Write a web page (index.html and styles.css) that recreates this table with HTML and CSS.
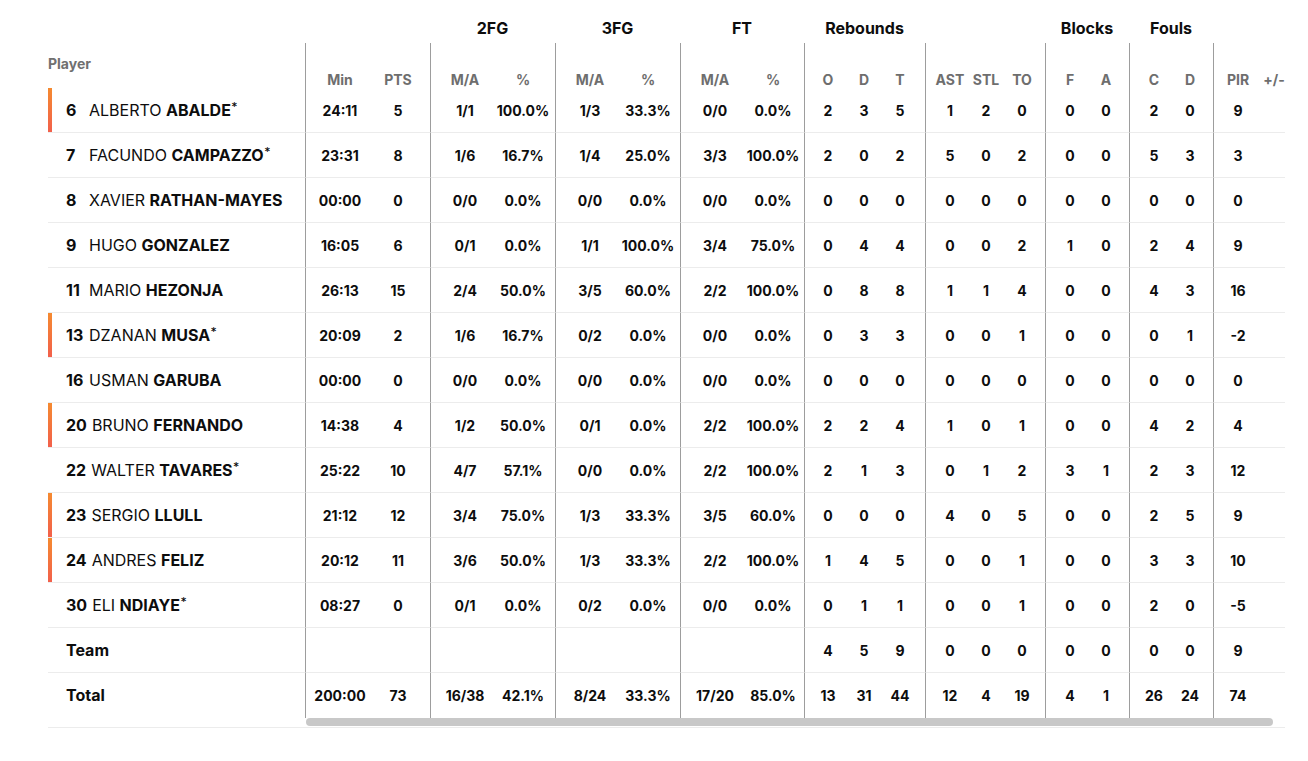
FILE: index.html
```html
<!DOCTYPE html>
<html lang="en">
<head>
<meta charset="utf-8">
<title>Box score</title>
<link rel="stylesheet" href="styles.css">
</head>
<body>
<div class="box">
  <div class="players">
    <div class="phead"><span>Player</span></div>
    <div class="prow on"><span class="num">6</span><span class="fn">ALBERTO</span>&nbsp;<b>ABALDE</b><sup>*</sup></div>
    <div class="prow"><span class="num">7</span><span class="fn">FACUNDO</span>&nbsp;<b>CAMPAZZO</b><sup>*</sup></div>
    <div class="prow"><span class="num">8</span><span class="fn">XAVIER</span>&nbsp;<b>RATHAN-MAYES</b></div>
    <div class="prow"><span class="num">9</span><span class="fn">HUGO</span>&nbsp;<b>GONZALEZ</b></div>
    <div class="prow"><span class="num">11</span><span class="fn">MARIO</span>&nbsp;<b>HEZONJA</b></div>
    <div class="prow on"><span class="num">13</span><span class="fn">DZANAN</span>&nbsp;<b>MUSA</b><sup>*</sup></div>
    <div class="prow"><span class="num">16</span><span class="fn">USMAN</span>&nbsp;<b>GARUBA</b></div>
    <div class="prow on"><span class="num">20</span><span class="fn">BRUNO</span>&nbsp;<b>FERNANDO</b></div>
    <div class="prow"><span class="num">22</span><span class="fn">WALTER</span>&nbsp;<b>TAVARES</b><sup>*</sup></div>
    <div class="prow on"><span class="num">23</span><span class="fn">SERGIO</span>&nbsp;<b>LLULL</b></div>
    <div class="prow on"><span class="num">24</span><span class="fn">ANDRES</span>&nbsp;<b>FELIZ</b></div>
    <div class="prow"><span class="num">30</span><span class="fn">ELI</span>&nbsp;<b>NDIAYE</b><sup>*</sup></div>
    <div class="prow"><b>Team</b></div>
    <div class="prow last"><b>Total</b></div>
  </div>
  <div class="scroll">
    <div class="stats">
      <div class="grow">
        <div class="g g-a"></div><div class="g g-b">2FG</div><div class="g g-b">3FG</div><div class="g g-c">FT</div><div class="g g-r">Rebounds</div><div class="g g-s"></div><div class="g g-k">Blocks</div><div class="g g-k">Fouls</div><div class="g g-p"></div>
      </div>
      <div class="row sub">
        <div class="g g-a"><span>Min</span><span>PTS</span></div><div class="g g-b"><span>M/A</span><span>%</span></div><div class="g g-b"><span>M/A</span><span>%</span></div><div class="g g-c"><span>M/A</span><span>%</span></div><div class="g g-r"><span>O</span><span>D</span><span>T</span></div><div class="g g-s"><span>AST</span><span>STL</span><span>TO</span></div><div class="g g-k"><span>F</span><span>A</span></div><div class="g g-k"><span>C</span><span>D</span></div><div class="g g-p"><span>PIR</span><span>+/-</span></div>
      </div>
      <div class="row">
        <div class="g g-a"><span>24:11</span><span>5</span></div><div class="g g-b"><span>1/1</span><span>100.0%</span></div><div class="g g-b"><span>1/3</span><span>33.3%</span></div><div class="g g-c"><span>0/0</span><span>0.0%</span></div><div class="g g-r"><span>2</span><span>3</span><span>5</span></div><div class="g g-s"><span>1</span><span>2</span><span>0</span></div><div class="g g-k"><span>0</span><span>0</span></div><div class="g g-k"><span>2</span><span>0</span></div><div class="g g-p"><span>9</span><span></span></div>
      </div>
      <div class="row">
        <div class="g g-a"><span>23:31</span><span>8</span></div><div class="g g-b"><span>1/6</span><span>16.7%</span></div><div class="g g-b"><span>1/4</span><span>25.0%</span></div><div class="g g-c"><span>3/3</span><span>100.0%</span></div><div class="g g-r"><span>2</span><span>0</span><span>2</span></div><div class="g g-s"><span>5</span><span>0</span><span>2</span></div><div class="g g-k"><span>0</span><span>0</span></div><div class="g g-k"><span>5</span><span>3</span></div><div class="g g-p"><span>3</span><span></span></div>
      </div>
      <div class="row">
        <div class="g g-a"><span>00:00</span><span>0</span></div><div class="g g-b"><span>0/0</span><span>0.0%</span></div><div class="g g-b"><span>0/0</span><span>0.0%</span></div><div class="g g-c"><span>0/0</span><span>0.0%</span></div><div class="g g-r"><span>0</span><span>0</span><span>0</span></div><div class="g g-s"><span>0</span><span>0</span><span>0</span></div><div class="g g-k"><span>0</span><span>0</span></div><div class="g g-k"><span>0</span><span>0</span></div><div class="g g-p"><span>0</span><span></span></div>
      </div>
      <div class="row">
        <div class="g g-a"><span>16:05</span><span>6</span></div><div class="g g-b"><span>0/1</span><span>0.0%</span></div><div class="g g-b"><span>1/1</span><span>100.0%</span></div><div class="g g-c"><span>3/4</span><span>75.0%</span></div><div class="g g-r"><span>0</span><span>4</span><span>4</span></div><div class="g g-s"><span>0</span><span>0</span><span>2</span></div><div class="g g-k"><span>1</span><span>0</span></div><div class="g g-k"><span>2</span><span>4</span></div><div class="g g-p"><span>9</span><span></span></div>
      </div>
      <div class="row">
        <div class="g g-a"><span>26:13</span><span>15</span></div><div class="g g-b"><span>2/4</span><span>50.0%</span></div><div class="g g-b"><span>3/5</span><span>60.0%</span></div><div class="g g-c"><span>2/2</span><span>100.0%</span></div><div class="g g-r"><span>0</span><span>8</span><span>8</span></div><div class="g g-s"><span>1</span><span>1</span><span>4</span></div><div class="g g-k"><span>0</span><span>0</span></div><div class="g g-k"><span>4</span><span>3</span></div><div class="g g-p"><span>16</span><span></span></div>
      </div>
      <div class="row">
        <div class="g g-a"><span>20:09</span><span>2</span></div><div class="g g-b"><span>1/6</span><span>16.7%</span></div><div class="g g-b"><span>0/2</span><span>0.0%</span></div><div class="g g-c"><span>0/0</span><span>0.0%</span></div><div class="g g-r"><span>0</span><span>3</span><span>3</span></div><div class="g g-s"><span>0</span><span>0</span><span>1</span></div><div class="g g-k"><span>0</span><span>0</span></div><div class="g g-k"><span>0</span><span>1</span></div><div class="g g-p"><span>-2</span><span></span></div>
      </div>
      <div class="row">
        <div class="g g-a"><span>00:00</span><span>0</span></div><div class="g g-b"><span>0/0</span><span>0.0%</span></div><div class="g g-b"><span>0/0</span><span>0.0%</span></div><div class="g g-c"><span>0/0</span><span>0.0%</span></div><div class="g g-r"><span>0</span><span>0</span><span>0</span></div><div class="g g-s"><span>0</span><span>0</span><span>0</span></div><div class="g g-k"><span>0</span><span>0</span></div><div class="g g-k"><span>0</span><span>0</span></div><div class="g g-p"><span>0</span><span></span></div>
      </div>
      <div class="row">
        <div class="g g-a"><span>14:38</span><span>4</span></div><div class="g g-b"><span>1/2</span><span>50.0%</span></div><div class="g g-b"><span>0/1</span><span>0.0%</span></div><div class="g g-c"><span>2/2</span><span>100.0%</span></div><div class="g g-r"><span>2</span><span>2</span><span>4</span></div><div class="g g-s"><span>1</span><span>0</span><span>1</span></div><div class="g g-k"><span>0</span><span>0</span></div><div class="g g-k"><span>4</span><span>2</span></div><div class="g g-p"><span>4</span><span></span></div>
      </div>
      <div class="row">
        <div class="g g-a"><span>25:22</span><span>10</span></div><div class="g g-b"><span>4/7</span><span>57.1%</span></div><div class="g g-b"><span>0/0</span><span>0.0%</span></div><div class="g g-c"><span>2/2</span><span>100.0%</span></div><div class="g g-r"><span>2</span><span>1</span><span>3</span></div><div class="g g-s"><span>0</span><span>1</span><span>2</span></div><div class="g g-k"><span>3</span><span>1</span></div><div class="g g-k"><span>2</span><span>3</span></div><div class="g g-p"><span>12</span><span></span></div>
      </div>
      <div class="row">
        <div class="g g-a"><span>21:12</span><span>12</span></div><div class="g g-b"><span>3/4</span><span>75.0%</span></div><div class="g g-b"><span>1/3</span><span>33.3%</span></div><div class="g g-c"><span>3/5</span><span>60.0%</span></div><div class="g g-r"><span>0</span><span>0</span><span>0</span></div><div class="g g-s"><span>4</span><span>0</span><span>5</span></div><div class="g g-k"><span>0</span><span>0</span></div><div class="g g-k"><span>2</span><span>5</span></div><div class="g g-p"><span>9</span><span></span></div>
      </div>
      <div class="row">
        <div class="g g-a"><span>20:12</span><span>11</span></div><div class="g g-b"><span>3/6</span><span>50.0%</span></div><div class="g g-b"><span>1/3</span><span>33.3%</span></div><div class="g g-c"><span>2/2</span><span>100.0%</span></div><div class="g g-r"><span>1</span><span>4</span><span>5</span></div><div class="g g-s"><span>0</span><span>0</span><span>1</span></div><div class="g g-k"><span>0</span><span>0</span></div><div class="g g-k"><span>3</span><span>3</span></div><div class="g g-p"><span>10</span><span></span></div>
      </div>
      <div class="row">
        <div class="g g-a"><span>08:27</span><span>0</span></div><div class="g g-b"><span>0/1</span><span>0.0%</span></div><div class="g g-b"><span>0/2</span><span>0.0%</span></div><div class="g g-c"><span>0/0</span><span>0.0%</span></div><div class="g g-r"><span>0</span><span>1</span><span>1</span></div><div class="g g-s"><span>0</span><span>0</span><span>1</span></div><div class="g g-k"><span>0</span><span>0</span></div><div class="g g-k"><span>2</span><span>0</span></div><div class="g g-p"><span>-5</span><span></span></div>
      </div>
      <div class="row">
        <div class="g g-a"><span></span><span></span></div><div class="g g-b"><span></span><span></span></div><div class="g g-b"><span></span><span></span></div><div class="g g-c"><span></span><span></span></div><div class="g g-r"><span>4</span><span>5</span><span>9</span></div><div class="g g-s"><span>0</span><span>0</span><span>0</span></div><div class="g g-k"><span>0</span><span>0</span></div><div class="g g-k"><span>0</span><span>0</span></div><div class="g g-p"><span>9</span><span></span></div>
      </div>
      <div class="row last">
        <div class="g g-a"><span>200:00</span><span>73</span></div><div class="g g-b"><span>16/38</span><span>42.1%</span></div><div class="g g-b"><span>8/24</span><span>33.3%</span></div><div class="g g-c"><span>17/20</span><span>85.0%</span></div><div class="g g-r"><span>13</span><span>31</span><span>44</span></div><div class="g g-s"><span>12</span><span>4</span><span>19</span></div><div class="g g-k"><span>4</span><span>1</span></div><div class="g g-k"><span>26</span><span>24</span></div><div class="g g-p"><span>74</span><span></span></div>
      </div>
    </div>
    <div class="bar"><div class="thumb"></div></div>
  </div>
</div>
</body>
</html>
```

FILE: styles.css
```css
* { box-sizing: border-box; }
html, body { margin: 0; padding: 0; background: #fff; }
body {
  font-family: Inter, "Liberation Sans", sans-serif;
  color: #0d0d0d;
}
.box {
  display: flex;
  width: 1237px;
  margin-left: 48px;
  border-bottom: 1px solid #ececec;
}
.players {
  width: 257px;
  flex: none;
  display: flex;
  flex-direction: column;
}
.phead {
  height: 88px;
  padding-top: 55px;
  font-size: 14px;
  line-height: 18px;
  font-weight: 700;
  color: #707070;
}
.prow {
  height: 45px;
  border-bottom: 1px solid #ececec;
  padding-left: 18px;
  font-size: 16px;
  line-height: 44px;
  white-space: nowrap;
  display: flex;
  align-items: baseline;
}
.prow.on {
  background: linear-gradient(#f58a30, #f2604b) no-repeat 0 0 / 4px 100%;
}
.prow.last { border-bottom: none; }
.prow b { font-weight: 700; }
.num {
  font-weight: 700;
  min-width: 18px;
  margin-right: 5px;
}
.fn { font-weight: 400; }
.prow sup {
  font-family: "DejaVu Sans", sans-serif;
  font-size: 10px;
  font-weight: 700;
  line-height: 10px;
  align-self: flex-start;
  margin-top: 14px;
  margin-left: 1px;
}
.scroll {
  width: 980px;
  flex: none;
  overflow: hidden;
}
.stats { width: 993px; }
.grow {
  display: flex;
  height: 43px;
}
.grow .g {
  padding-top: 18px;
  line-height: 20px;
  font-size: 16px;
  font-weight: 700;
  text-align: center;
}
.row {
  display: flex;
  height: 45px;
}
.g { flex: none; }
.row .g {
  display: flex;
  border-left: 1px solid #9d9d9d;
  border-bottom: 1px solid #ececec;
  padding-left: 6px;
  font-size: 14px;
  font-weight: 700;
  align-items: center;
}
.row .g span {
  width: 36px;
  flex: none;
  text-align: center;
  white-space: nowrap;
}
.g-a, .g-b { width: 125px; }
.g-c { width: 124px; }
.g-r { width: 121px; }
.g-s { width: 120px; }
.g-k { width: 84px; }
.g-p { width: 85px; }
.row .g-a, .row .g-b, .row .g-c { padding-left: 5px; }
.row .g-r { padding-left: 5px; }
.row .g-a span, .row .g-b span, .row .g-c span { width: 58px; }
.row.sub .g {
  border-bottom: none;
  align-items: flex-end;
  line-height: 17px;
  color: #6e6e6e;
}
.row.last .g { border-bottom: none; }
.bar { height: 9px; }
.thumb {
  margin-left: 1px;
  width: 967px;
  height: 8px;
  border-radius: 4px;
  background: #c8c8c8;
}
```
